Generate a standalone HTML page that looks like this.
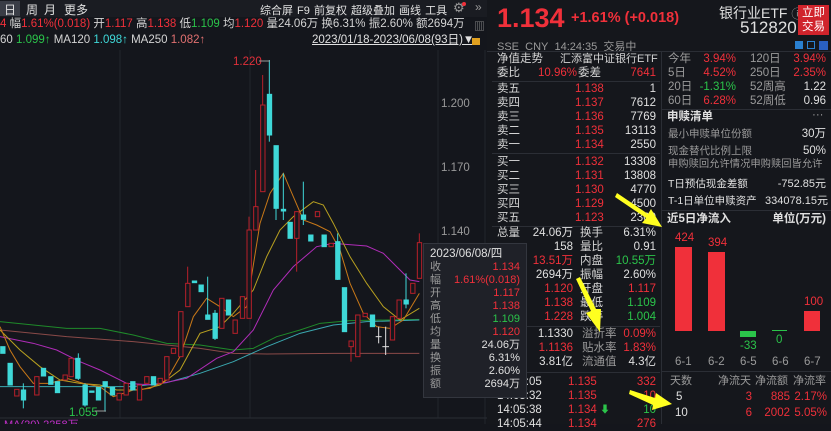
<!DOCTYPE html>
<html><head><meta charset="utf-8"><style>
*{margin:0;padding:0;box-sizing:border-box}
body{width:831px;height:424px;overflow:hidden;background:#14161c;font-family:"Liberation Sans","Noto Sans CJK SC",sans-serif;color:#d4d4d4;font-size:11.5px;position:relative}
.a{position:absolute;white-space:nowrap}
.r{color:#f0303a}.g{color:#2bc44a}.w{color:#e0e0e0}.l{color:#9a9a9a}.c{color:#3fd8d8}
.row{position:absolute;height:14px;line-height:14px;font-size:11.5px;white-space:nowrap}
</style></head><body>
<div class="a" style="left:0;top:0;width:487px;height:17px;background:#1a1c22"></div>
<div class="a" style="left:0;top:1px;width:20px;height:15px;background:#3a3d46"></div>
<div class="a w" style="left:4px;top:1px;font-size:12px">日</div>
<div class="a w" style="left:26px;top:1px;font-size:12px">周</div>
<div class="a w" style="left:44px;top:1px;font-size:12px">月</div>
<div class="a w" style="left:64px;top:1px;font-size:12px">更多</div>
<div class="a w" style="left:260px;top:2px;font-size:11px;word-spacing:1px">综合屏 F9 前复权 超级叠加 画线 工具</div>
<div class="a l" style="left:453px;top:0px;font-size:13px">⚙</div>
<div class="a" style="left:462px;top:2px;width:4px;height:4px;border-radius:50%;background:#f0303a"></div>
<div class="a l" style="left:475px;top:0px;font-size:12px">»</div>
<div class="a" style="left:0;top:17px;font-size:11.5px;line-height:15px"><span class="r">4</span> 幅<span class="r">1.61%(0.018)</span> 开<span class="r">1.117</span> 高<span class="r">1.138</span> 低<span class="g">1.109</span> 均<span class="r">1.120</span> 量24.06万 换6.31% 振2.60% 额2694万</div>
<div class="a l" style="left:474px;top:18px;font-size:11px">▥</div>
<div class="a" style="left:0;top:33px;font-size:11.5px;line-height:15px">60 <span class="g">1.099↑</span> MA120 <span class="c">1.098↑</span> MA250 <span style="color:#e07070">1.082↑</span></div>
<div class="a w" style="left:312px;top:33px;font-size:11.5px;line-height:15px;text-decoration:underline">2023/01/18-2023/06/08(93日)▼</div>
<div class="a" style="left:472px;top:38px;width:8px;height:7px;background:#e0a020"></div>

<svg class="a" style="left:0;top:50px" width="487" height="374">
<g stroke="#22252c" stroke-width="1">
<line x1="120" y1="0" x2="120" y2="368"/><line x1="250" y1="0" x2="250" y2="368"/><line x1="438" y1="0" x2="438" y2="368"/><line x1="485" y1="0" x2="485" y2="374"/>
<line x1="0" y1="368" x2="487" y2="368" stroke="#2a2d34"/>
</g>
<g transform="scale(0.33333)" fill="none" stroke-width="3">
<polyline stroke="#8a4a48" points="0,840 200,860 400,875 600,895 700,910 800,912 1000,910 1258,910"/>
<polyline stroke="#1f8a2a" points="0,815 200,835 300,835 400,855 500,880 600,885 700,900 760,895 830,860 900,840 960,820 1050,812 1258,808"/>
<polyline stroke="#3aa8b0" points="0,1010 400,1010 500,998 600,970 700,935 800,890 900,850 1000,825 1100,815 1258,810"/>
<polyline stroke="#b02cb8" points="0,860 100,880 170,900 240,935 300,960 380,1000 460,1005 560,985 650,925 700,905 760,840 820,720 880,650 950,590 1000,580 1100,588 1150,610 1200,660 1230,690 1258,695"/>
<polyline stroke="#b8a020" points="0,840 60,900 120,950 180,990 240,1000 300,1005 350,1020 420,1020 480,1005 540,960 600,850 660,830 700,790 760,720 800,620 840,540 880,500 940,455 970,465 1000,520 1050,620 1100,700 1150,770 1200,810 1258,775"/>
<polyline stroke="#c87818" points="0,830 30,900 60,950 100,1000 150,1000 200,985 250,1000 300,1010 340,1040 400,1020 450,1015 500,990 540,920 580,800 620,745 660,770 700,800 740,770 780,520 810,430 850,370 880,440 910,510 950,525 990,545 1020,600 1050,700 1090,790 1130,830 1170,835 1210,810 1258,730"/>
<g stroke="#3fd8d8" fill="#3fd8d8">
<rect x="2" y="890" width="13" height="20"/><rect x="24" y="940" width="13" height="65"/><rect x="64" y="1020" width="13" height="30"/>
<rect x="124" y="955" width="13" height="23"/><rect x="146" y="980" width="13" height="23"/><rect x="166" y="995" width="13" height="33"/>
<rect x="227" y="925" width="13" height="60"/><rect x="249" y="1005" width="13" height="60"/><rect x="269" y="1023" width="13" height="4"/>
<rect x="289" y="1012" width="13" height="38"/><rect x="309" y="995" width="13" height="15"/><rect x="331" y="1012" width="13" height="23"/>
<rect x="392" y="995" width="13" height="25"/><rect x="454" y="980" width="13" height="25"/><rect x="577" y="693" width="13" height="5"/>
<rect x="597" y="705" width="13" height="20"/><rect x="617" y="795" width="13" height="13"/><rect x="639" y="790" width="13" height="75"/>
<rect x="679" y="750" width="13" height="45"/><rect x="802" y="133" width="13" height="122"/><rect x="822" y="287" width="13" height="188"/>
<rect x="844" y="478" width="13" height="5"/><rect x="864" y="517" width="13" height="48"/><rect x="904" y="495" width="13" height="13"/>
<rect x="926" y="555" width="13" height="18"/><rect x="966" y="555" width="13" height="35"/><rect x="1007" y="575" width="13" height="113"/>
<rect x="1027" y="713" width="13" height="132"/><rect x="1111" y="795" width="13" height="35"/><rect x="1212" y="750" width="13" height="12"/>
</g>
<g stroke="#3fd8d8">
<line x1="808" y1="30" x2="808" y2="275"/><line x1="828" y1="287" x2="828" y2="510"/><line x1="850" y1="370" x2="850" y2="510"/><line x1="910" y1="395" x2="910" y2="525"/><line x1="1013" y1="550" x2="1013" y2="690"/><line x1="70" y1="1000" x2="70" y2="1075"/><line x1="255" y1="1000" x2="255" y2="1070"/><line x1="315" y1="995" x2="315" y2="1085"/><line x1="645" y1="780" x2="645" y2="870"/><line x1="623" y1="680" x2="623" y2="808"/><line x1="1218" y1="670" x2="1218" y2="775"/><line x1="235" y1="910" x2="235" y2="990"/>
</g>
<g stroke="#b8202a" fill="#15171d">
<rect x="44" y="1018" width="13" height="20"/><rect x="104" y="980" width="13" height="55"/><rect x="189" y="975" width="13" height="15"/>
<rect x="207" y="925" width="13" height="55"/><rect x="351" y="1030" width="13" height="20"/><rect x="372" y="1000" width="13" height="35"/>
<rect x="412" y="1005" width="13" height="45"/><rect x="434" y="980" width="13" height="20"/><rect x="474" y="985" width="13" height="15"/>
<rect x="494" y="920" width="13" height="70"/><rect x="514" y="895" width="13" height="15"/><rect x="536" y="785" width="13" height="135"/>
<rect x="557" y="700" width="13" height="70"/><rect x="659" y="745" width="13" height="90"/><rect x="699" y="810" width="13" height="40"/>
<rect x="721" y="740" width="13" height="65"/><rect x="741" y="540" width="13" height="265"/><rect x="761" y="470" width="13" height="70"/>
<rect x="782" y="165" width="13" height="260"/><rect x="884" y="485" width="13" height="80"/><rect x="946" y="485" width="13" height="15"/>
<rect x="987" y="580" width="13" height="10"/><rect x="1047" y="873" width="13" height="17"/><rect x="1067" y="795" width="13" height="125"/>
<rect x="1089" y="790" width="13" height="10"/><rect x="1171" y="800" width="13" height="70"/><rect x="1191" y="750" width="13" height="55"/>
<rect x="1232" y="700" width="13" height="30"/><rect x="1252" y="578" width="13" height="107"/>
<line x1="788" y1="75" x2="788" y2="165"/><line x1="767" y1="360" x2="767" y2="470"/><line x1="747" y1="500" x2="747" y2="540"/><line x1="890" y1="565" x2="890" y2="665"/><line x1="563" y1="650" x2="563" y2="700"/><line x1="1053" y1="890" x2="1053" y2="935"/><line x1="1258" y1="550" x2="1258" y2="578"/>
</g>
<g stroke="#e0e0e0"><line x1="1127" y1="860" x2="1145" y2="860"/><line x1="1136" y1="830" x2="1136" y2="880"/><line x1="1147" y1="890" x2="1167" y2="890"/><line x1="1157" y1="830" x2="1157" y2="915"/></g>
</g>
<text x="233" y="15" fill="#e0303a" font-size="11.5" font-family="Liberation Sans">1.220</text>
<line x1="259" y1="11" x2="270" y2="11" stroke="#999"/>
<text x="69" y="366" fill="#2bc44a" font-size="11.5" font-family="Liberation Sans">1.055</text>
<line x1="95" y1="361" x2="106" y2="361" stroke="#999"/>
<g fill="#9a9a9a" font-size="11.5" font-family="Liberation Sans"><text x="441" y="57">1.200</text><text x="441" y="121">1.170</text><text x="441" y="185">1.140</text></g>
<text x="4" y="378" fill="#c030c8" font-size="11" font-family="Liberation Sans">MA(20) 2258万</text>
</svg>

<div class="a" style="left:487px;top:0;width:344px;height:424px;background:#15171c"></div>
<div class="a r" style="left:497px;top:3px;font-size:27px;font-weight:bold">1.134</div>
<div class="a r" style="left:571px;top:10px;font-size:14.5px;font-weight:bold">+1.61% (+0.018)</div>
<div class="a w" style="left:719px;top:3px;font-size:14px">银行业ETF <span class="l" style="font-size:12px">ⓘ</span></div>
<div class="a w" style="left:740px;top:18px;font-size:17px">512820</div>
<div class="a" style="left:798px;top:5px;width:31px;height:30px;background:#d0242c;color:#fff;font-size:11.5px;line-height:14px;text-align:center;padding-top:1px">立即<br>交易</div>
<div class="a l" style="left:497px;top:38px;font-size:11px">SSE&nbsp; CNY&nbsp; 14:24:35&nbsp; 交易中</div>
<div class="a" style="left:795px;top:41px;width:8px;height:8px;background:#2a80d0"></div>
<div class="a" style="left:807px;top:41px;width:8px;height:8px;border:1px solid #2a80d0"></div>
<div class="a" style="left:819px;top:41px;width:9px;height:9px;background:#2a60c0"></div>
<div class="a" style="left:487px;top:51px;width:344px;height:1px;background:#2b2e35"></div>
<div class="a" style="left:661px;top:51px;width:1px;height:373px;background:#2b2e35"></div>

<div class="row" style="left:497px;top:52px">净值走势</div><div class="row" style="left:560px;top:52px;width:96px;text-align:right;font-size:11px">汇添富中证银行ETF</div>
<div class="row" style="left:497px;top:66px">委比</div><div class="row r" style="left:538px;top:66px">10.96%</div><div class="row" style="left:578px;top:66px">委差</div><div class="row r" style="left:600px;top:66px;width:56px;text-align:right">7641</div>
<div class="a" style="left:492px;top:81px;width:168px;height:1px;background:#2b2e35"></div>
<div class="row" style="left:497px;top:82px">卖五</div><div class="row r" style="left:575px;top:82px">1.138</div><div class="row w" style="left:600px;top:82px;width:56px;text-align:right">1</div>
<div class="row" style="left:497px;top:96px">卖四</div><div class="row r" style="left:575px;top:96px">1.137</div><div class="row w" style="left:600px;top:96px;width:56px;text-align:right">7612</div>
<div class="row" style="left:497px;top:110px">卖三</div><div class="row r" style="left:575px;top:110px">1.136</div><div class="row w" style="left:600px;top:110px;width:56px;text-align:right">7769</div>
<div class="row" style="left:497px;top:124px">卖二</div><div class="row r" style="left:575px;top:124px">1.135</div><div class="row w" style="left:600px;top:124px;width:56px;text-align:right">13113</div>
<div class="row" style="left:497px;top:138px">卖一</div><div class="row r" style="left:575px;top:138px">1.134</div><div class="row w" style="left:600px;top:138px;width:56px;text-align:right">2550</div>
<div class="a" style="left:492px;top:153px;width:168px;height:1px;background:#2b2e35"></div>
<div class="row" style="left:497px;top:155px">买一</div><div class="row r" style="left:575px;top:155px">1.132</div><div class="row w" style="left:600px;top:155px;width:56px;text-align:right">13308</div>
<div class="row" style="left:497px;top:169px">买二</div><div class="row r" style="left:575px;top:169px">1.131</div><div class="row w" style="left:600px;top:169px;width:56px;text-align:right">13808</div>
<div class="row" style="left:497px;top:183px">买三</div><div class="row r" style="left:575px;top:183px">1.130</div><div class="row w" style="left:600px;top:183px;width:56px;text-align:right">4770</div>
<div class="row" style="left:497px;top:197px">买四</div><div class="row r" style="left:575px;top:197px">1.129</div><div class="row w" style="left:600px;top:197px;width:56px;text-align:right">4500</div>
<div class="row" style="left:497px;top:211px">买五</div><div class="row r" style="left:575px;top:211px">1.123</div><div class="row w" style="left:600px;top:211px;width:56px;text-align:right">2300</div>
<div class="a" style="left:492px;top:226px;width:168px;height:1px;background:#2b2e35"></div>
<div class="row" style="left:497px;top:226px">总量</div><div class="row w" style="left:527px;top:226px;width:46px;text-align:right">24.06万</div><div class="row" style="left:580px;top:226px">换手</div><div class="row w" style="left:600px;top:226px;width:56px;text-align:right">6.31%</div>
<div class="row w" style="left:527px;top:240px;width:46px;text-align:right">158</div><div class="row" style="left:580px;top:240px">量比</div><div class="row w" style="left:600px;top:240px;width:56px;text-align:right">0.91</div>
<div class="row r" style="left:527px;top:254px;width:46px;text-align:right">13.51万</div><div class="row" style="left:580px;top:254px">内盘</div><div class="row g" style="left:600px;top:254px;width:56px;text-align:right">10.55万</div>
<div class="row w" style="left:527px;top:268px;width:46px;text-align:right">2694万</div><div class="row" style="left:580px;top:268px">振幅</div><div class="row w" style="left:600px;top:268px;width:56px;text-align:right">2.60%</div>
<div class="row r" style="left:527px;top:282px;width:46px;text-align:right">1.120</div><div class="row" style="left:580px;top:282px">开盘</div><div class="row r" style="left:600px;top:282px;width:56px;text-align:right">1.117</div>
<div class="row r" style="left:527px;top:296px;width:46px;text-align:right">1.138</div><div class="row" style="left:580px;top:296px">最低</div><div class="row g" style="left:600px;top:296px;width:56px;text-align:right">1.109</div>
<div class="row r" style="left:527px;top:310px;width:46px;text-align:right">1.228</div><div class="row" style="left:580px;top:310px">跌停</div><div class="row g" style="left:600px;top:310px;width:56px;text-align:right">1.004</div>
<div class="a" style="left:492px;top:326px;width:168px;height:1px;background:#2b2e35"></div>
<div class="row w" style="left:527px;top:327px;width:46px;text-align:right">1.1330</div><div class="row l" style="left:582px;top:327px">溢折率</div><div class="row r" style="left:600px;top:327px;width:56px;text-align:right">0.09%</div>
<div class="row r" style="left:527px;top:341px;width:46px;text-align:right">1.1136</div><div class="row l" style="left:582px;top:341px">贴水率</div><div class="row r" style="left:600px;top:341px;width:56px;text-align:right">1.83%</div>
<div class="row w" style="left:527px;top:355px;width:46px;text-align:right">3.81亿</div><div class="row l" style="left:582px;top:355px">流通值</div><div class="row w" style="left:600px;top:355px;width:56px;text-align:right">4.3亿</div>
<div class="a" style="left:492px;top:372px;width:168px;height:1px;background:#2b2e35"></div>
<div class="row w" style="left:497px;top:375px">14:05:05</div><div class="row r" style="left:568px;top:375px">1.135</div><div class="row r" style="left:600px;top:375px;width:56px;text-align:right">332</div>
<div class="row w" style="left:497px;top:389px">14:05:32</div><div class="row r" style="left:568px;top:389px">1.135</div><div class="row r" style="left:600px;top:389px;width:56px;text-align:right">10</div>
<div class="row w" style="left:497px;top:403px">14:05:38</div><div class="row r" style="left:568px;top:403px">1.134 <span class="g" style="font-size:10px">⬇</span></div><div class="row g" style="left:600px;top:403px;width:56px;text-align:right">10</div>
<div class="row w" style="left:497px;top:417px">14:05:44</div><div class="row r" style="left:568px;top:417px">1.134</div><div class="row r" style="left:600px;top:417px;width:56px;text-align:right">276</div>

<div class="row l" style="left:668px;top:52px">今年</div><div class="row r" style="left:690px;top:52px;width:46px;text-align:right">3.94%</div><div class="row l" style="left:750px;top:52px">120日</div><div class="row r" style="left:780px;top:52px;width:46px;text-align:right">3.94%</div>
<div class="row l" style="left:668px;top:66px">5日</div><div class="row r" style="left:690px;top:66px;width:46px;text-align:right">4.52%</div><div class="row l" style="left:750px;top:66px">250日</div><div class="row r" style="left:780px;top:66px;width:46px;text-align:right">2.35%</div>
<div class="row l" style="left:668px;top:80px">20日</div><div class="row g" style="left:690px;top:80px;width:46px;text-align:right">-1.31%</div><div class="row l" style="left:750px;top:80px">52周高</div><div class="row w" style="left:780px;top:80px;width:46px;text-align:right">1.22</div>
<div class="row l" style="left:668px;top:94px">60日</div><div class="row r" style="left:690px;top:94px;width:46px;text-align:right">6.28%</div><div class="row l" style="left:750px;top:94px">52周低</div><div class="row w" style="left:780px;top:94px;width:46px;text-align:right">0.96</div>
<div class="a" style="left:662px;top:109px;width:169px;height:1px;background:#2b2e35"></div>
<div class="row w" style="left:667px;top:110px;font-weight:bold">申赎清单</div><div class="row l" style="left:812px;top:108px">···</div>
<div class="row l" style="left:668px;top:127px;font-size:10.5px">最小申赎单位份额</div><div class="row w" style="left:780px;top:127px;width:46px;text-align:right">30万</div>
<div class="row l" style="left:668px;top:144px;font-size:10.5px">现金替代比例上限</div><div class="row w" style="left:780px;top:144px;width:46px;text-align:right">50%</div>
<div class="row l" style="left:668px;top:158px;font-size:10.3px">申购赎回允许情况申购赎回皆允许</div>
<div class="row w" style="left:668px;top:177px;font-size:10.5px">T日预估现金差额</div><div class="row w" style="left:760px;top:177px;width:66px;text-align:right;font-size:11px">-752.85元</div>
<div class="row w" style="left:668px;top:194px;font-size:10.5px">T-1日单位申赎资产</div><div class="row w" style="left:760px;top:194px;width:68px;text-align:right;font-size:11px">334078.15元</div>
<div class="a" style="left:662px;top:210px;width:169px;height:1px;background:#2b2e35"></div>
<div class="row w" style="left:667px;top:212px;font-weight:bold">近5日净流入</div><div class="row w" style="left:760px;top:212px;width:66px;text-align:right;font-weight:bold">单位(万元)</div>
<div class="a" style="left:675px;top:247px;width:17px;height:84px;background:#f0303a"></div>
<div class="a" style="left:708px;top:252px;width:17px;height:79px;background:#f0303a"></div>
<div class="a" style="left:740px;top:331px;width:16px;height:6px;background:#2bc44a"></div>
<div class="a" style="left:772px;top:330px;width:15px;height:1px;background:#2bc44a"></div>
<div class="a" style="left:804px;top:311px;width:16px;height:20px;background:#f0303a"></div>
<div class="row r" style="left:675px;top:231px">424</div><div class="row r" style="left:708px;top:236px">394</div>
<div class="row g" style="left:740px;top:339px">-33</div><div class="row g" style="left:776px;top:333px">0</div><div class="row r" style="left:804px;top:295px">100</div>
<div class="row l" style="left:675px;top:355px">6-1</div><div class="row l" style="left:708px;top:355px">6-2</div><div class="row l" style="left:740px;top:355px">6-5</div><div class="row l" style="left:772px;top:355px">6-6</div><div class="row l" style="left:804px;top:355px">6-7</div>
<div class="a" style="left:662px;top:371px;width:169px;height:1px;background:#2b2e35"></div>
<div class="row l" style="left:670px;top:374px;font-size:11px">天数</div><div class="row l" style="left:718px;top:374px;font-size:11px">净流天</div><div class="row l" style="left:755px;top:374px;font-size:11px">净流额</div><div class="row l" style="left:793px;top:374px;font-size:11px">净流率</div>
<div class="row w" style="left:676px;top:390px">5</div><div class="row r" style="left:740px;top:390px;width:12px;text-align:right">3</div><div class="row r" style="left:760px;top:390px;width:30px;text-align:right">885</div><div class="row r" style="left:790px;top:390px;width:37px;text-align:right">2.17%</div>
<div class="row w" style="left:675px;top:406px">10</div><div class="row r" style="left:740px;top:406px;width:12px;text-align:right">6</div><div class="row r" style="left:760px;top:406px;width:30px;text-align:right">2002</div><div class="row r" style="left:790px;top:406px;width:37px;text-align:right">5.05%</div>

<div class="a" style="left:423px;top:243px;width:104px;height:155px;background:#1f2128;border:1px solid #33363e"></div>
<div class="a w" style="left:430px;top:248px;font-size:11.5px;line-height:13px">2023/06/08/四</div>
<div class="a l" style="left:430px;top:261px;font-size:11px;line-height:13px">收<br>幅<br>开<br>高<br>低<br>均<br>量<br>换<br>振<br>额</div>
<div class="a" style="left:440px;top:261px;width:80px;text-align:right;font-size:11px;line-height:13px"><span class="r">1.134</span><br><span class="r">1.61%(0.018)</span><br><span class="r">1.117</span><br><span class="r">1.138</span><br><span class="g">1.109</span><br><span class="r">1.120</span><br><span class="w">24.06万</span><br><span class="w">6.31%</span><br><span class="w">2.60%</span><br><span class="w">2694万</span></div>

<svg class="a" style="left:0;top:0" width="831" height="424">
<g fill="#ffff20">
<polygon points="617,193 648,214 651,209 662,227 642,223 646,218 615,197"/>
<polygon points="576,279 591,311 586,313 600,332 601,309 596,309 580,277"/>
<polygon points="630,390 655,398 656,393 672,404 652,410 653,405 629,394"/>
</g>
</svg>
</body></html>
